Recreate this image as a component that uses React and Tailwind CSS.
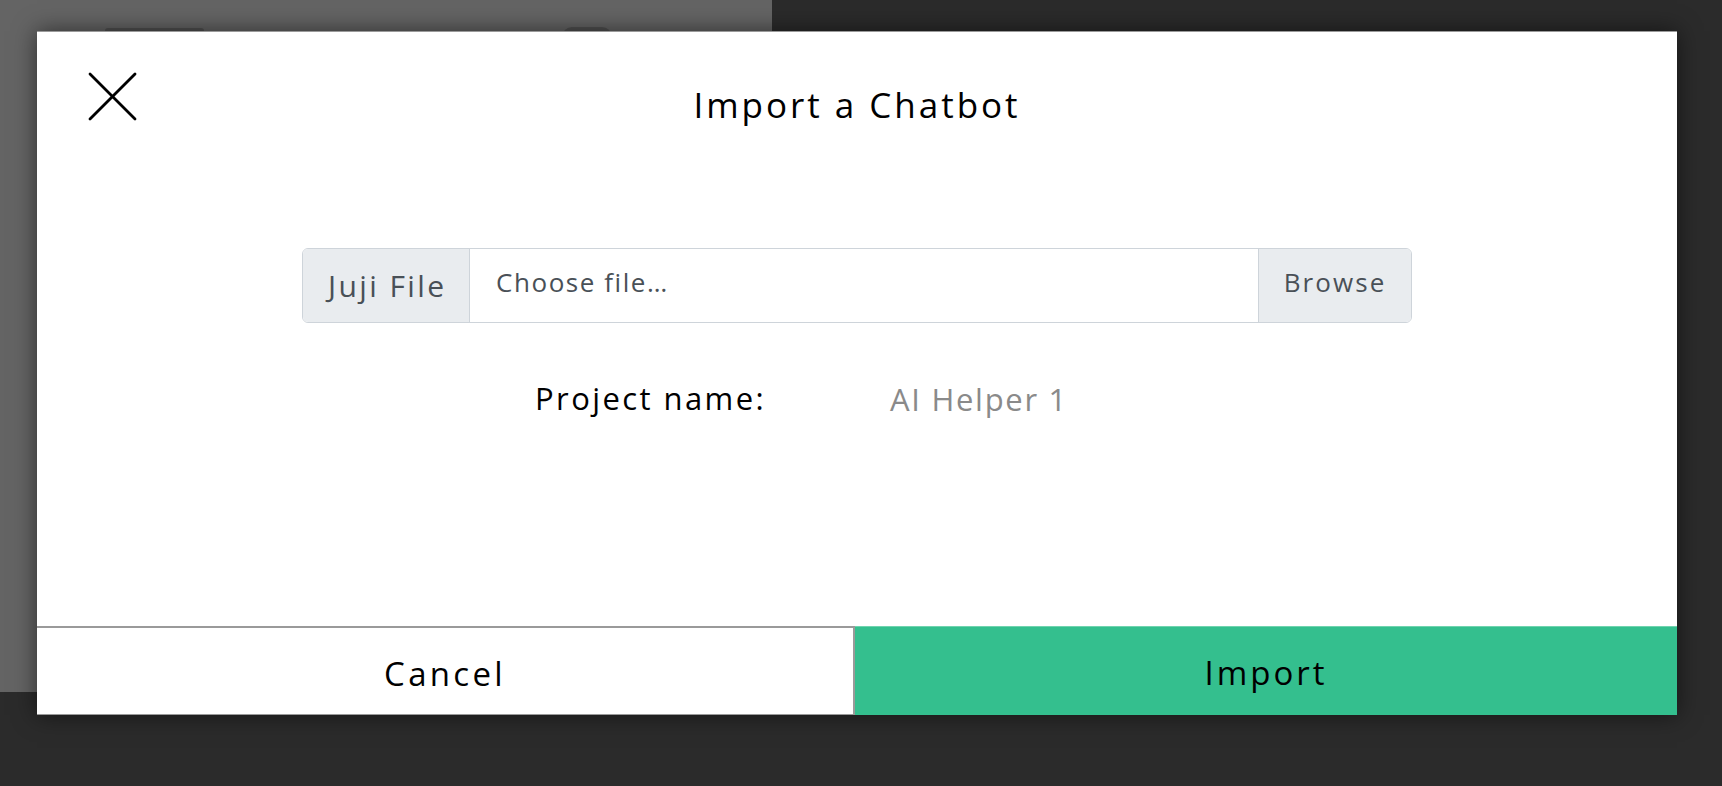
import React from "react";

export default function App() {
  const font = { fontFamily: '"Open Sans", "Liberation Sans", sans-serif' };
  return (
    <div className="relative w-full h-[786px] bg-[#2b2b2b] overflow-hidden" style={font}>
      {/* background panel */}
      <div className="w-[772px] h-[692px] bg-[#646464]" />
      {/* peeking elements behind modal */}
      <div className="absolute left-[105px] top-[28px] w-[99px] h-[8px] rounded-t-[3px] bg-[#505050]" />
      <div className="absolute left-[562px] top-[27px] w-[50px] h-[10px] rounded-t-full bg-[#505050]" />

      {/* modal */}
      <div className="absolute left-[37px] top-[31px] w-[1640px] h-[684px] flex flex-col bg-white shadow-[0_0_22px_rgba(0,0,0,0.55)]">
        <div className="h-[595px] flex flex-col border-t border-[#9a9a9a]">
          <div className="grid grid-cols-[1fr_auto_1fr] items-start">
            <button className="justify-self-start ml-[51px] mt-[40px] w-[49px] h-[49px] flex items-center justify-center">
              <svg width="49" height="49" viewBox="0 0 49 49">
                <line x1="2" y1="2" x2="47" y2="47" stroke="#000" strokeWidth="2.8" strokeLinecap="round" />
                <line x1="47" y1="2" x2="2" y2="47" stroke="#000" strokeWidth="2.8" strokeLinecap="round" />
              </svg>
            </button>
            <h1 className="mt-[50px] text-[35px] leading-[46px] tracking-[0.085em] text-black font-normal">
              Import a Chatbot
            </h1>
            <div />
          </div>

          <div className="mt-[120px] mx-auto w-[1110px] h-[75px] flex rounded-[6px] border border-[#ced4da] overflow-hidden">
            <div className="w-[167px] bg-[#e9ecef] border-r border-[#ced4da] flex items-center pl-[25px] text-[30px] tracking-[0.08em] text-[#495057]">
              Juji File
            </div>
            <div className="flex-1 flex items-center pl-[26px] pb-[6px] text-[26px] tracking-[0.06em] text-[#495057]">
              Choose file…
            </div>
            <div className="w-[153px] bg-[#e9ecef] border-l border-[#ced4da] flex items-center justify-center pb-[6px] text-[26px] tracking-[0.08em] text-[#495057]">
              Browse
            </div>
          </div>

          <div className="mx-auto w-[1110px] mt-[52px] flex items-center">
            <div className="ml-[233px] w-[355px] text-[31px] leading-[44px] tracking-[0.078em] text-black">
              Project name:
            </div>
            <div className="text-[31px] leading-[44px] mt-[2px] tracking-[0.055em] text-[#8a8a8a]">
              AI Helper 1
            </div>
          </div>
        </div>

        <div className="flex h-[89px]">
          <button className="w-[818px] bg-white border-t-2 border-r-2 border-b border-[#9a9a9a] flex items-center justify-center pt-[6px] text-[33px] tracking-[0.1em] text-black">
            Cancel
          </button>
          <button className="flex-1 bg-[#34bf8e] border-t border-[#6fd3ae] flex items-center justify-center pt-[4px] text-[33px] tracking-[0.09em] text-black">
            Import
          </button>
        </div>
      </div>
    </div>
  );
}
